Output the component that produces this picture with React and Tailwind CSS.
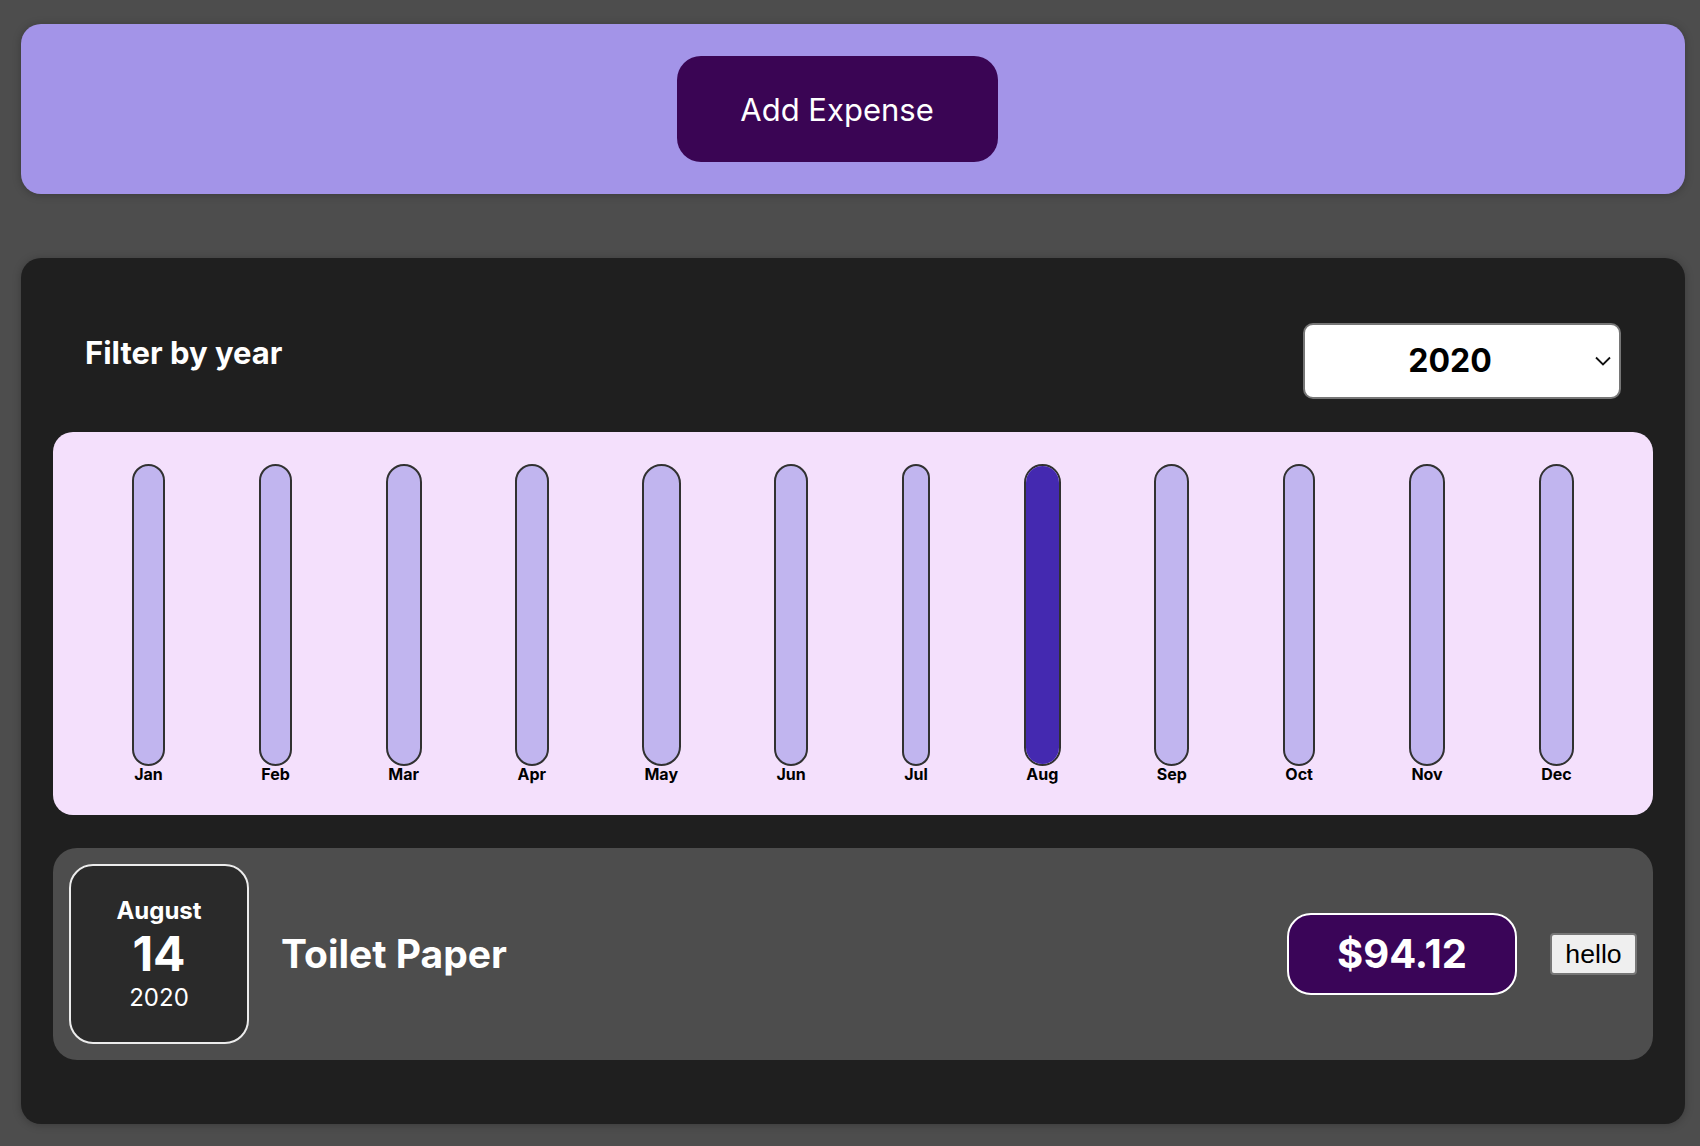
import { useState } from "react";

// Months shown on the chart, only August holds an expense
const months = ["Jan", "Feb", "Mar", "Apr", "May", "Jun", "Jul", "Aug", "Sep", "Oct", "Nov", "Dec"];
const monthTotals = [0, 0, 0, 0, 0, 0, 0, 94.12, 0, 0, 0, 0];

const expenses = [
  { id: "e1", title: "Toilet Paper", amount: 94.12, date: new Date(2020, 7, 14) },
];

function ChartBar({ label, value, max }) {
  const fill = max > 0 ? Math.round((value / max) * 100) + "%" : "0%";
  return (
    <div className="flex h-full flex-col items-center">
      <div className="flex w-full flex-1 flex-col justify-end overflow-hidden rounded-full border-2 border-[#313131] bg-[#c1b5ef]">
        <div className="bg-[#4429b0]" style={{ height: fill }} />
      </div>
      <div className="px-[2.5px] text-center text-[16px] font-bold leading-[17px] text-black">{label}</div>
    </div>
  );
}

function ExpenseDate({ date }) {
  const month = date.toLocaleString("en-US", { month: "long" });
  const day = date.toLocaleString("en-US", { day: "2-digit" });
  const year = date.getFullYear();
  return (
    <div className="flex h-[180px] w-[180px] shrink-0 flex-col items-center justify-center rounded-[24px] border-2 border-[#ececec] bg-[#2a2a2a] text-white">
      <div className="text-[24px] font-bold leading-[29px]">{month}</div>
      <div className="text-[48px] font-bold leading-[58px]">{day}</div>
      <div className="text-[24px] leading-[29px]">{year}</div>
    </div>
  );
}

function ExpenseItem({ item }) {
  return (
    <div className="mb-[32px] mt-[33px] flex items-center rounded-[24px] bg-[#4d4d4d] p-[16px]">
      <ExpenseDate date={item.date} />
      <div className="flex flex-1 items-center">
        <h2 className="mx-[32px] flex-1 text-[39px] font-bold text-white">{item.title}</h2>
        <div className="flex h-[82px] w-[230px] items-center justify-center rounded-[24px] border-2 border-white bg-[#3a0558] text-[40px] font-bold text-white">
          ${item.amount}
        </div>
      </div>
      <button className="ml-[33px] h-[42px] w-[87px] rounded-[4px] border-2 border-[#767676] bg-[#efefef] font-['Liberation_Sans',Arial,sans-serif] text-[26.67px] leading-none text-black">
        hello
      </button>
    </div>
  );
}

export default function App() {
  const [year] = useState("2020");
  const max = Math.max(...monthTotals);

  return (
    <div className="min-h-screen bg-[#4d4d4d] pb-[23px] pt-[24px] font-['Inter',sans-serif]">
      {/* New expense */}
      <div className="ml-[21px] w-[1664px] rounded-[20px] bg-[#a394e8] p-[32px] text-center shadow-[0_1px_8px_rgba(0,0,0,0.25)]">
        <button className="mr-[32px] h-[106px] w-[321px] rounded-[24px] bg-[#3a0554] pt-[2px] text-[31px] text-white">
          Add Expense
        </button>
      </div>

      {/* Expenses */}
      <div className="ml-[21px] mt-[64px] flow-root w-[1664px] rounded-[20px] bg-[#1f1f1f] p-[32px] shadow-[0_1px_8px_rgba(0,0,0,0.25)]">
        <div className="mt-[33px] flex h-[76px] items-center justify-between px-[32px] text-white">
          <label className="mb-[16px] text-[31px] font-bold">Filter by year</label>
          <div className="flex h-[76px] w-[318px] items-center rounded-[10px] border-2 border-[#767676] bg-white text-black">
            <span className="flex-1 text-center text-[32px] font-bold">{year}</span>
            <svg width="16" height="10" viewBox="0 0 16 10" className="mr-[8px]">
              <polyline points="1,1.5 8,8.5 15,1.5" fill="none" stroke="#111" strokeWidth="1.8" />
            </svg>
          </div>
        </div>

        <div className="mt-[33px] flex h-[383px] justify-around rounded-[20px] bg-[#f4e0fc] p-[32px]">
          {months.map((m, i) => (
            <ChartBar key={m} label={m} value={monthTotals[i]} max={max} />
          ))}
        </div>

        {expenses.map((item) => (
          <ExpenseItem key={item.id} item={item} />
        ))}
      </div>
    </div>
  );
}
